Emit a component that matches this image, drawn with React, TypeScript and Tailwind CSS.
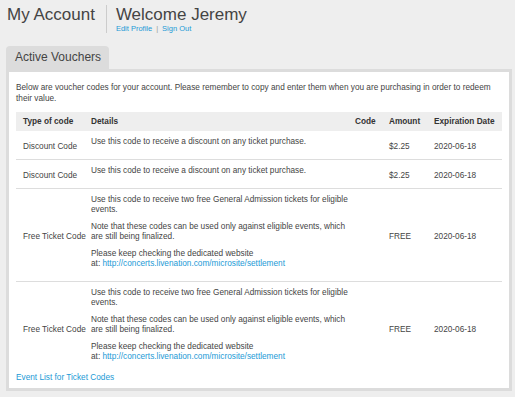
const LINK = "http://concerts.livenation.com/microsite/settlement";

interface Voucher {
  type: string;
  amount: string;
  expires: string;
  free: boolean;
}

const VOUCHERS: Voucher[] = [
  { type: "Discount Code", amount: "$2.25", expires: "2020-06-18", free: false },
  { type: "Discount Code", amount: "$2.25", expires: "2020-06-18", free: false },
  { type: "Free Ticket Code", amount: "FREE", expires: "2020-06-18", free: true },
  { type: "Free Ticket Code", amount: "FREE", expires: "2020-06-18", free: true },
];

const COLS = "grid grid-cols-[68px_264px_34px_45px_1fr]";

function Details({ free }: { free: boolean }) {
  if (!free) {
    return (
      <p className="mb-[7px]">Use this code to receive a discount on any ticket purchase.</p>
    );
  }
  return (
    <>
      <p className="mb-[7px]">
        Use this code to receive two free General Admission tickets for eligible
        <br />
        events.
      </p>
      <p className="mb-[7px]">
        Note that these codes can be used only against eligible events, which
        <br />
        are still being finalized.
      </p>
      <p className="mb-[7px]">
        Please keep checking the dedicated website
        <br />
        at: <a href="#" className="text-[#1c9ad6]">{LINK}</a>
      </p>
    </>
  );
}

export default function App() {
  return (
    <div className="min-h-screen bg-[#eeeeee] font-['Liberation_Sans',Arial,sans-serif] text-[#444]">
      {/* Header */}
      <div className="flex items-start pl-[7px] pt-[5px]">
        <div className="h-[28px] border-r border-[#cccccc] pr-[11px] text-[17px] leading-[20px]">
          My Account
        </div>
        <div className="pl-[9px]">
          <div className="text-[17px] leading-[20px]">Welcome Jeremy</div>
          <div className="-mt-[1px] flex text-[7.5px] leading-[9px]">
            <a href="#" className="text-[#1c9ad6]">Edit Profile</a>
            <span className="mx-[4px] text-[#999]">|</span>
            <a href="#" className="text-[#1c9ad6]">Sign Out</a>
          </div>
        </div>
      </div>

      {/* Tab */}
      <div className="ml-[6px] mt-[13px] inline-block h-[23px] rounded-t-[4px] bg-[#dcdcdc] pl-[9px] pr-[8px] text-[12px] leading-[23px]">
        Active Vouchers
      </div>

      {/* Panel */}
      <div className="ml-[6px] mr-[3px] border-[3px] border-[#dcdcdc] bg-white px-[7px] pb-[5px] pt-[10px] text-[8.25px]">
        <p className="mb-[8px] leading-[11px]">
          Below are voucher codes for your account. Please remember to copy and enter them when you are purchasing in order to redeem their value.
        </p>

        <div className="leading-[10px]">
          <div className={`${COLS} h-[19px] items-center bg-[#eeeeee] font-bold text-[#333]`}>
            <div className="pl-[7px]">Type of code</div>
            <div className="pl-[7px]">Details</div>
            <div className="pl-[7px]">Code</div>
            <div className="pl-[7px]">Amount</div>
            <div className="pl-[7px]">Expiration Date</div>
          </div>

          {VOUCHERS.map((v, i) => (
            <div
              key={i}
              className={`${COLS} items-center ${i > 0 ? "border-t border-[#dddddd]" : ""}`}
            >
              <div className="whitespace-nowrap pl-[7px] pt-[3px]">{v.type}</div>
              <div className="whitespace-nowrap pb-[5px] pl-[7px] pt-[6px]">
                <Details free={v.free} />
              </div>
              <div className="pl-[7px]" />
              <div className="pl-[7px] pt-[3px]">{v.amount}</div>
              <div className="pl-[7px] pt-[3px]">{v.expires}</div>
            </div>
          ))}
        </div>

        <a href="#" className="-mt-[1px] block leading-[10px] text-[#1c9ad6]">
          Event List for Ticket Codes
        </a>
      </div>
    </div>
  );
}
